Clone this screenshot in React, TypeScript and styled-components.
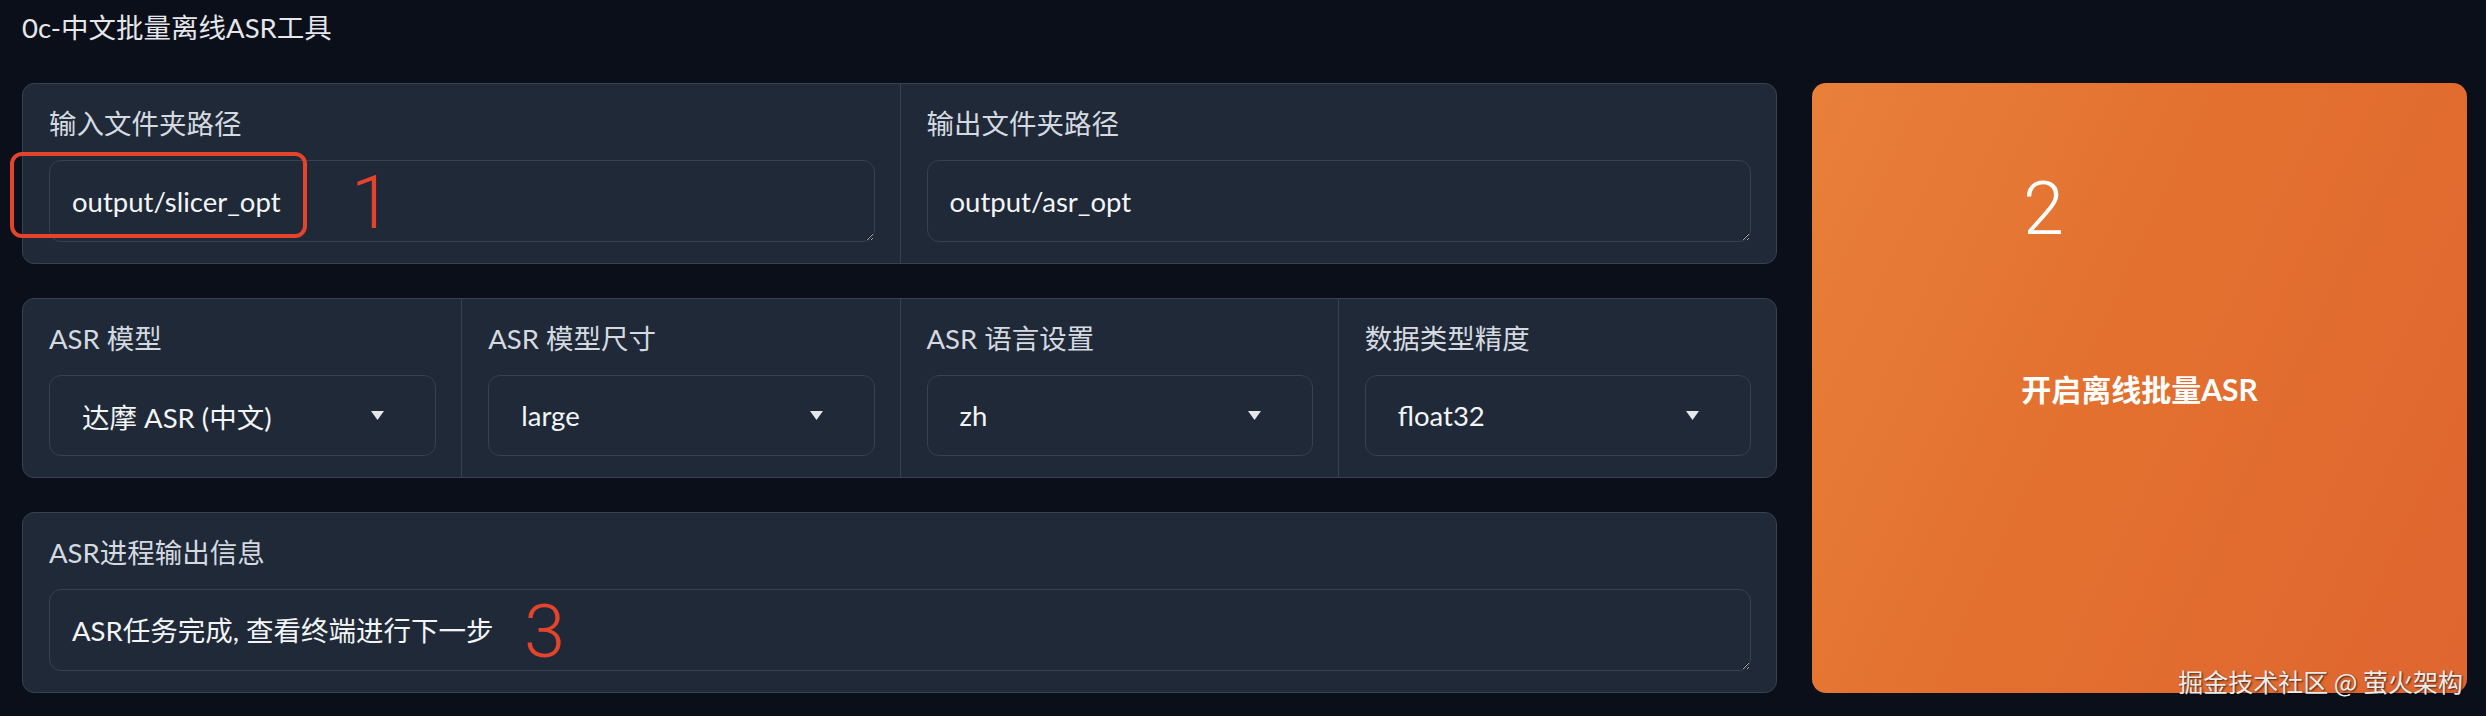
import React from "react";
import styled, { createGlobalStyle } from "styled-components";

const FONT = `Lato, "Noto Sans CJK SC", "Noto Sans", sans-serif`;

const GlobalStyle = createGlobalStyle`
  html, body {
    margin: 0;
    padding: 0;
    background: #0b0f19;
  }
  body {
    width: 2486px;
    height: 716px;
    overflow: hidden;
    font-family: ${FONT};
  }
`;

const Page = styled.div`
  position: relative;
  box-sizing: border-box;
  width: 2486px;
  height: 716px;
  padding: 10px 19px 0 22px;
`;

const Title = styled.div`
  font-size: 27.5px;
  line-height: 36px;
  color: #e5e7eb;
  margin-bottom: 37px;
`;

const Main = styled.div`
  display: flex;
  gap: 35px;
  align-items: stretch;
`;

const LeftCol = styled.div`
  width: 1755px;
  display: flex;
  flex-direction: column;
  gap: 34px;
`;

const Block = styled.div<{ $cols: number }>`
  display: grid;
  grid-template-columns: repeat(${(p) => p.$cols}, 1fr);
  background: #1f2937;
  border: 1px solid #374151;
  border-radius: 12px;
  overflow: hidden;
`;

const Cell = styled.div`
  display: flex;
  flex-direction: column;
  gap: 18px;
  padding: 22px 25px 21px 26px;
  & + & {
    border-left: 1px solid #374151;
  }
`;

const Label = styled.div`
  font-size: 27.5px;
  line-height: 36px;
  color: #d5d9e0;
`;

const TextArea = styled.textarea`
  box-sizing: border-box;
  display: block;
  width: 100%;
  height: 82px;
  margin: 0;
  padding: 21px 22px 0;
  border: 1px solid #374151;
  border-radius: 12px;
  background: #1f2937;
  color: #f3f4f6;
  font-family: ${FONT};
  font-size: 27.5px;
  line-height: 40px;
  resize: vertical;
  outline: none;
  color-scheme: dark;
  overflow: hidden;
`;

const Select = styled.div`
  box-sizing: border-box;
  height: 81px;
  display: flex;
  align-items: center;
  justify-content: space-between;
  padding: 0 51px 0 32px;
  border: 1px solid #374151;
  border-radius: 12px;
  background: #1f2937;
  color: #f3f4f6;
  font-size: 27.5px;
`;

const Caret = styled.svg`
  width: 13px;
  height: 9px;
  flex: none;
`;

const RunButton = styled.button`
  width: 655px;
  border: none;
  border-radius: 14px;
  background: linear-gradient(115deg, #e8803a 0%, #e3702f 45%, #df6630 100%);
  color: #ffffff;
  font-family: ${FONT};
  font-size: 30px;
  font-weight: 700;
  display: flex;
  align-items: center;
  justify-content: center;
  padding: 0;
  cursor: pointer;
`;

const RedBox = styled.div`
  position: absolute;
  left: 10px;
  top: 152px;
  width: 297px;
  height: 86px;
  box-sizing: border-box;
  border: 4px solid #e5442c;
  border-radius: 12px;
  pointer-events: none;
`;

const Marker = styled.div<{ $x: number; $y: number; $color: string }>`
  position: absolute;
  left: ${(p) => p.$x}px;
  top: ${(p) => p.$y}px;
  font-family: Roboto, "Liberation Sans", sans-serif;
  font-weight: 300;
  font-size: 74px;
  line-height: 1;
  color: ${(p) => p.$color};
  pointer-events: none;
`;

const Watermark = styled.div`
  position: absolute;
  right: 23px;
  top: 666px;
  font-family: "Noto Sans CJK SC", sans-serif;
  font-size: 25px;
  line-height: 30px;
  color: #ececec;
  text-shadow: 1px 1px 2px rgba(0, 0, 0, 0.7);
  white-space: pre;
  pointer-events: none;
`;

const Dropdown = ({ value }: { value: string }) => (
  <Select>
    <span>{value}</span>
    <Caret viewBox="0 0 13 9">
      <path d="M0 0 L13 0 L6.5 9 Z" fill="#e5e7eb" />
    </Caret>
  </Select>
);

export default function App() {
  return (
    <>
      <GlobalStyle />
      <Page>
        <Title>0c-中文批量离线ASR工具</Title>
        <Main>
          <LeftCol>
            <Block $cols={2}>
              <Cell>
                <Label>输入文件夹路径</Label>
                <TextArea readOnly defaultValue="output/slicer_opt" />
              </Cell>
              <Cell>
                <Label>输出文件夹路径</Label>
                <TextArea readOnly defaultValue="output/asr_opt" />
              </Cell>
            </Block>
            <Block $cols={4}>
              <Cell>
                <Label>ASR 模型</Label>
                <Dropdown value="达摩 ASR (中文)" />
              </Cell>
              <Cell>
                <Label>ASR 模型尺寸</Label>
                <Dropdown value="large" />
              </Cell>
              <Cell>
                <Label>ASR 语言设置</Label>
                <Dropdown value="zh" />
              </Cell>
              <Cell>
                <Label>数据类型精度</Label>
                <Dropdown value="float32" />
              </Cell>
            </Block>
            <Block $cols={1}>
              <Cell>
                <Label>ASR进程输出信息</Label>
                <TextArea readOnly defaultValue="ASR任务完成, 查看终端进行下一步" />
              </Cell>
            </Block>
          </LeftCol>
          <RunButton>开启离线批量ASR</RunButton>
        </Main>
        <RedBox />
        <Marker $x={351} $y={166} $color="#e5442c">1</Marker>
        <Marker $x={2023} $y={172} $color="#ffffff">2</Marker>
        <Marker $x={524} $y={595} $color="#e5442c">3</Marker>
        <Watermark>掘金技术社区 @ 萤火架构</Watermark>
      </Page>
    </>
  );
}
